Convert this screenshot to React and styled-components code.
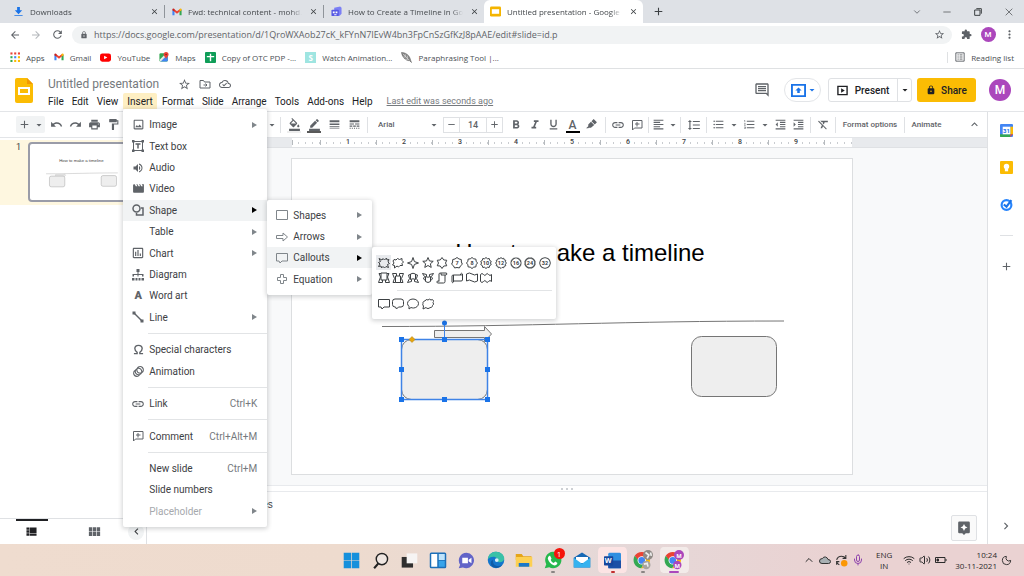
import styled, { createGlobalStyle, css } from "styled-components"
import {
  MdAdd,
  MdAnimation,
  MdArrowBack,
  MdArrowDropDown,
  MdArrowForward,
  MdBorderColor,
  MdChevronLeft,
  MdChevronRight,
  MdClose,
  MdExtension,
  MdFormatAlignLeft,
  MdFormatBold,
  MdFormatClear,
  MdFormatColorFill,
  MdFormatIndentDecrease,
  MdFormatIndentIncrease,
  MdFormatItalic,
  MdFormatLineSpacing,
  MdFormatListBulleted,
  MdFormatListNumbered,
  MdFormatPaint,
  MdFormatUnderlined,
  MdInsertLink,
  MdKeyboardArrowUp,
  MdLineStyle,
  MdLineWeight,
  MdLock,
  MdMoreVert,
  MdMovie,
  MdOutlineCloudDone,
  MdOutlineImage,
  MdOutlineInsertChart,
  MdOutlineInsertComment,
  MdPrint,
  MdRedo,
  MdRefresh,
  MdRemove,
  MdStarBorder,
  MdUndo,
  MdViewModule,
  MdVolumeUp,
} from "react-icons/md"
import { ChevronDown, ChevronUp, Mic, Moon, Volume2, Wifi } from "lucide-react"

const GlobalStyle = createGlobalStyle`
  *, *::before, *::after {
    box-sizing: border-box;
  }

  body {
    margin: 0;
    background: white;
    font-family: Roboto, "Liberation Sans", sans-serif;
    font-size: 10px;
    color: #3c4043;
  }

  button, input, select {
    margin: 0;
    padding: 0;
    border: 0;
    background: none;
    font: inherit;
    color: inherit;
    outline: none;
  }

  svg {
    display: block;
    flex-shrink: 0;
  }
`

const Page = styled.div`
  display: flex;
  flex-direction: column;
  min-height: 100vh;
`

/* ---------- browser ---------- */

const Browser = styled.header`
  font-family: "Open Sans", "Noto Sans", sans-serif;
  font-size: 8px;
  color: #5f6368;
`

const TabStrip = styled.div`
  display: flex;
  height: 23px;
  padding-left: 7px;
  background: #dee1e6;
`

const Tab = styled.div`
  display: flex;
  align-items: center;
  width: 159px;
  padding: 0 5px 0 6px;
  gap: 6px;
  border-radius: 6px 6px 0 0;
  color: #45494d;
  background: ${props => (props.$active ? "white" : "none")};
`

const TabTitle = styled.span`
  flex: 1;
  min-width: 0;
  overflow: hidden;
  white-space: nowrap;
  mask-image: linear-gradient(90deg, black 90%, transparent);
`

const TabDivider = styled.i`
  width: 1px;
  height: 13px;
  margin: 5px -4px 5px -1px;
  background: #8f949a;
`

const ChromeButton = styled.button`
  display: flex;
  align-items: center;
  justify-content: center;
  width: ${props => props.$width || 10}px;
  color: ${props => props.$color || "#3c4043"};
`

const WindowButtons = styled.div`
  display: flex;
  margin-left: auto;
`

const AddressRow = styled.div`
  display: flex;
  align-items: center;
  height: 23px;
  padding: 0 6px 0 4px;
`

const Omnibox = styled.label`
  display: flex;
  flex: 1;
  align-items: center;
  gap: 6px;
  height: 18px;
  margin: 0 5px 0 4px;
  padding: 0 7px 0 8px;
  border-radius: 9px;
  background: #f1f3f4;
  color: #5f6368;

  input {
    flex: 1;
    font-size: 9px;
  }
`

const Bookmarks = styled.nav`
  display: flex;
  align-items: center;
  height: 23px;
  padding: 0 10px;
  gap: 9px;
  border-bottom: 1px solid #dfe1e3;

  a {
    display: flex;
    align-items: center;
    gap: 6px;
    color: #4b4f54;
    text-decoration: none;
    white-space: nowrap;
  }

  a:last-child {
    margin-left: auto;
    padding-left: 7px;
    border-left: 1px solid #dfe1e3;
  }
`

/* ---------- docs header ---------- */

const DocsHeader = styled.div`
  display: flex;
  height: 43px;
  padding: 0 13px 0 15px;
  border-bottom: 1px solid #e3e5e8;
`

const Heading = styled.div`
  flex: 1;
  padding: 7px 0 0 11px;
`

const TitleRow = styled.div`
  display: flex;
  align-items: center;
  gap: 8px;
  height: 16px;
  padding-left: 4px;
  color: #5f6368;

  input {
    width: 122px;
    font-size: 12px;
    color: #75797d;
  }
`

const MenuBar = styled.nav`
  display: flex;
  align-items: center;
  height: 18px;
  color: #202124;
`

const MenuAnchor = styled.div`
  position: relative;
  margin: 0 ${props => (props.$open ? 1 : 0)}px;
`

const MenuButton = styled.button`
  height: 16px;
  padding: 0 4px;
  border-radius: 2px 2px 0 0;
  white-space: nowrap;
  background: ${props => (props.$open ? "#feefc3" : "none")};
`

const LastEdit = styled.a`
  margin-left: 10px;
  color: #75797d;
  font-size: 9px;
  white-space: nowrap;
`

const HeaderActions = styled.div`
  display: flex;
  align-items: center;
  font-weight: 500;
`

const Pill = styled.button`
  display: flex;
  align-items: center;
  justify-content: center;
  width: 37px;
  height: 24px;
  margin: 0 7px 0 14px;
  padding-left: 4px;
  border: 1px solid #e3e5e8;
  border-radius: 12px;
  color: #1a73e8;
`

const PresentGroup = styled.div`
  display: flex;
  height: 24px;
  margin-right: 5px;
  border: 1px solid #dfe1e4;
  border-radius: 3px;

  button {
    display: flex;
    align-items: center;
    justify-content: center;
    gap: 7px;
    width: 68px;
    color: #202124;
  }

  button + button {
    width: 14px;
    border-left: 1px solid #dfe1e4;
  }
`

const ShareButton = styled.button`
  display: flex;
  align-items: center;
  justify-content: center;
  gap: 5px;
  width: 59px;
  height: 24px;
  margin-right: 13px;
  border-radius: 3px;
  background: #fbbc04;
  color: #202124;
`

const Avatar = styled.span`
  display: flex;
  align-items: center;
  justify-content: center;
  width: ${props => props.$size}px;
  height: ${props => props.$size}px;
  border-radius: 50%;
  background: #ab47bc;
  color: white;
  font: 500 ${props => (props.$size > 16 ? 12 : 8)}px Roboto, sans-serif;
`

/* ---------- menus ---------- */

const Popup = styled.div`
  position: absolute;
  z-index: 5;
  background: white;
  border-radius: 2px;
  box-shadow: 0 1px 4px 1px rgba(60, 64, 67, 0.22);
  color: #3c4043;
`

const InsertMenu = styled(Popup)`
  top: 100%;
  left: 0;
  width: 144px;
  padding: 5px 0;
`

const ShapeMenu = styled(Popup)`
  top: 0;
  left: 100%;
  width: 105px;
  padding: 5px 0;
`

const Palette = styled(Popup)`
  top: 0;
  left: 100%;
  width: 184px;
  padding: 8px 4px;
`

const MenuSection = styled.div`
  display: flex;
  flex-direction: column;
  height: ${props => props.$height}px;
`

const MenuItem = styled.div`
  position: relative;
  flex: 1;
  background: ${props => (props.$active ? "#f1f3f4" : "none")};
  color: ${props => (props.$disabled ? "#a6a9ad" : "inherit")};

  > button {
    display: grid;
    grid-template-columns: 12px 1fr auto;
    align-items: center;
    gap: 5px;
    width: 100%;
    height: 100%;
    padding: 0 10px 0 9px;
    text-align: left;
    white-space: nowrap;
  }
`

const ItemIcon = styled.span`
  display: flex;
  justify-content: center;
  color: ${props => (props.$light ? "#80868b" : "#5f6368")};
`

const Shortcut = styled.span`
  color: #75797d;
`

const MenuArrow = styled.span`
  width: 0;
  border: solid transparent;
  border-width: 3px 0 3px 5px;
  border-left-color: ${props => (props.$active ? "#000" : "#80868b")};
`

const MenuRule = styled.hr`
  height: 1px;
  margin: 5px 0 5px ${props => props.$indent || 25}px;
  border: 0;
  background: #e2e4e6;
`

const PaletteGrid = styled.div`
  display: grid;
  grid-template-columns: repeat(12, 1fr);
  grid-auto-rows: 15px;

  button {
    display: flex;
    align-items: center;
    justify-content: center;
  }

  button[aria-pressed="true"] {
    background: #e8eaed;
  }
`

/* ---------- toolbar ---------- */

const Body = styled.div`
  display: flex;
  flex: 1;
`

const Editor = styled.main`
  display: flex;
  flex: 1;
  flex-direction: column;
  min-width: 0;
`

const Toolbar = styled.div`
  display: flex;
  align-items: center;
  height: 26px;
  padding: 0 6px 0 16px;
  border-bottom: 1px solid #e3e5e8;
  color: #5f6368;
`

const ToolGroup = styled.div`
  display: flex;
  align-items: center;
  justify-content: ${props => (props.$start ? "flex-start" : "center")};
  flex-shrink: 0;
  width: ${props => props.$width}px;
  height: 16px;

  & + & {
    border-left: 1px solid #dfe1e4;
  }

  &:nth-child(2) {
    border-left: 0;
  }
`

const ToolButton = styled.button`
  display: flex;
  align-items: center;
  justify-content: center;
  flex-shrink: 0;
  width: ${props => props.$width || 19}px;
  height: 17px;

  ${props =>
    props.$underline &&
    css`
      background: linear-gradient(${props.$underline}, ${props.$underline})
        center bottom / 14px 2px no-repeat;
    `}
`

const TextColor = styled(ToolButton)`
  font-size: 12px;
  font-weight: 500;
  line-height: 12px;
`

const NewSlide = styled.div`
  display: flex;
  width: 29px;
  height: 17px;
  margin-right: 2px;
  border-radius: 2px;
  background: #f1f3f4;
`

const FontPicker = styled.label`
  display: flex;
  align-items: center;
  width: 65px;
  margin-left: 10px;
  padding-right: 3px;
  font-size: 8px;
  font-weight: 500;

  select {
    flex: 1;
    appearance: none;
  }
`

const SizeStepper = styled.div`
  display: flex;
  height: 16px;
  margin-right: 3px;
  border: 1px solid #dfe1e4;

  button {
    height: auto;
  }

  input {
    width: 28px;
    border: solid #dfe1e4;
    border-width: 0 1px;
    font-size: 9px;
    font-weight: 500;
    text-align: center;
  }
`

const TextTool = styled.button`
  font-size: 8px;
  font-weight: 500;
  white-space: nowrap;
`

const Collapse = styled.button`
  margin-left: auto;
`

/* ---------- workspace ---------- */

const Workspace = styled.div`
  display: flex;
  flex: 1;
`

const Filmstrip = styled.aside`
  display: flex;
  flex-direction: column;
  width: 147px;
  padding-top: 2px;
  border-right: 1px solid #dfe1e4;
`

const FilmSlide = styled.div`
  display: flex;
  gap: 7px;
  padding: 2px 14px 3px 16px;
  background: #fef7e0;
  font-size: 9px;
`

const Thumb = styled.div`
  flex: 1;
  border: 2px solid #9a9ca8;
  border-radius: 4px;
  background: white;
  overflow: hidden;
`

const FilmFooter = styled.div`
  display: flex;
  height: 26px;
  margin-top: auto;
  padding-left: 16px;
  border-top: 1px solid #dfe1e4;
`

const ViewButton = styled.button`
  display: flex;
  align-items: center;
  justify-content: center;
  width: 32px;
  margin-right: ${props => (props.$active ? 31 : 17)}px;
  padding: 0 2px 2px 0;
  border-top: 2px solid ${props => (props.$active ? "#202124" : "transparent")};
  color: ${props => (props.$active ? "#202124" : "#5f6368")};
`

const CollapseStrip = styled.button`
  display: flex;
  align-items: center;
  justify-content: center;
  align-self: center;
  width: 16px;
  height: 16px;
  border-radius: 50%;
  background: #f1f3f4;
`

const Stage = styled.section`
  position: relative;
  display: flex;
  flex: 1;
  flex-direction: column;
`

const Ruler = styled.div`
  height: 10px;
  padding: 0 135px 0 145px;
  border-bottom: 1px solid #dfe1e4;
  background: #e8eaed;
`

const RulerScale = styled.div`
  display: grid;
  grid-template-columns: 1fr repeat(9, 2fr) 1fr;
  grid-template-rows: 9px;
  background: white;
  font-size: 7px;
  line-height: 5px;
`

const RulerCell = styled.span`
  display: flex;
  align-items: center;
  justify-content: center;
  border: solid transparent;
  border-width: 2px 0;
  background: linear-gradient(#b6babe, #b6babe) left / 1px 100% no-repeat
      padding-box,
    repeating-linear-gradient(90deg, transparent 0 6px, #c9ccd0 6px 7px) left /
      100% 2px no-repeat;

  b {
    padding: 0 4px;
    font-weight: 500;
    background: white;
  }
`

const Canvas = styled.div`
  flex: 1;
  padding: 11px 135px 10px 145px;
  background: #f8f9fa;
`

const Slide = styled.article`
  position: relative;
  aspect-ratio: 16 / 9;
  background: white;
  box-shadow: 0 0 0 1px #dcdee0;
`

const SlideTitle = styled.h1`
  position: absolute;
  top: 80px;
  right: 0;
  left: 16px;
  margin: 0;
  color: black;
  font: 24px/28px "Liberation Sans", Arial, sans-serif;
  text-align: center;
`

const NotesHandle = styled.div`
  display: flex;
  align-items: center;
  justify-content: center;
  gap: 3px;
  height: 7px;
  border: solid #e8eaed;
  border-width: 1px 0;

  i {
    width: 2px;
    height: 2px;
    border-radius: 50%;
    background: #bdc1c6;
  }
`

const Notes = styled.p`
  height: 52px;
  margin: 0;
  padding: 7px 8px;
  font: 10px/12px "Liberation Sans", Arial, sans-serif;
`

const ExploreButton = styled.button`
  position: absolute;
  right: 10px;
  bottom: 3px;
  display: flex;
  align-items: center;
  justify-content: center;
  width: 26px;
  height: 26px;
  border: 1px solid #dfe1e4;
  border-radius: 2px;
  background: #fafafa;
`

const SidePanel = styled.aside`
  display: flex;
  flex-direction: column;
  align-items: center;
  width: 37px;
  padding: 12px 0 11px;
  gap: 24px;
  border-left: 1px solid #dfe1e4;
  color: #5f6368;

  hr {
    width: 13px;
    height: 1px;
    margin: 0;
    border: 0;
    background: #dfe1e4;
  }

  button:last-child {
    margin-top: auto;
  }
`

/* ---------- taskbar ---------- */

const Taskbar = styled.footer`
  display: grid;
  grid-template-columns: 1fr auto 1fr;
  height: 32px;
  padding-left: 4px;
  background: linear-gradient(90deg, #efdccf, #eedbce 33%, #e5d8d8 60%, #ead2d2 82%);
  font-family: "Open Sans", "Noto Sans", sans-serif;
  font-size: 8px;
  color: #2b2b2b;
`

const Apps = styled.nav`
  display: flex;
  grid-column: 2;
  width: 353px;
`

const AppButton = styled.button`
  position: relative;
  display: flex;
  flex: 1 1 0;
  align-items: center;
  justify-content: center;

  ${props =>
    props.$tile &&
    css`
      margin: 3px 0;
      border: solid transparent;
      border-width: 0 2px;
      border-radius: 5px;
      background: ${props.$tile} padding-box;
    `}

  ${props =>
    props.$running &&
    css`
      &::after {
        content: "";
        position: absolute;
        bottom: ${props.$tile ? 0 : 3}px;
        width: ${props.$wide ? 10 : 4}px;
        height: 2px;
        border-radius: 1px;
        background: ${props.$running};
      }
    `}
`

const Badge = styled.span`
  position: absolute;
  top: 4px;
  right: 3px;
  width: 11px;
  height: 11px;
  border-radius: 50%;
  background: #f5140a;
  color: white;
  line-height: 11px;
  text-align: center;
`

const Tray = styled.div`
  display: flex;
  align-items: center;
  justify-content: flex-end;
  gap: 4px;
  padding-right: 12px;
  line-height: 11px;
  text-align: center;
`

const Clock = styled.time`
  margin-left: 4px;
  text-align: right;
  white-space: nowrap;
`

const Language = styled.span`
  margin: 0 7px 0 8px;
`

/* ---------- drawings ---------- */

function Glyph({ size = 12, box = 24, children, ...rest }) {
  return (
    <svg
      width={size}
      height={size}
      viewBox={`0 0 ${box} ${box}`}
      fill="none"
      stroke="currentColor"
      {...rest}
    >
      {children}
    </svg>
  )
}

const DownloadIcon = () => (
  <Glyph size={11} stroke="none" fill="#1a73e8">
    <path d="M9 2h6v7h5l-8 9-8-9h5zM3 20h18v2H3z" />
  </Glyph>
)

const GmailIcon = () => (
  <Glyph size={10} stroke="none">
    <path fill="#4285f4" d="M1 20V6l5 4v10z" />
    <path fill="#34a853" d="M18 20V10l5-4v14z" />
    <path fill="#ea4335" d="M4 4l8 6 8-6 3 3-11 9L1 7z" />
    <path fill="#c5221f" d="M1 6c0-3 3-3 5-1v6L1 8z" />
    <path fill="#fbbc04" d="M23 6c0-3-3-3-5-1v6l5-3z" />
  </Glyph>
)

const MeetDocIcon = () => (
  <Glyph size={11} stroke="none">
    <path fill="#7b7ff5" d="M7 4l13-3 3 3v13l-4 4H7z" />
    <rect fill="#5558e3" x="1" y="8" width="16" height="14" rx="2" />
    <path fill="white" d="M4 12h4v4H4zM10 12h4v4h-4zM7 18h5v2H7z" />
  </Glyph>
)

const SlidesFavicon = () => (
  <Glyph size={11} stroke="none">
    <rect fill="#f4b400" x="0" y="1" width="24" height="22" rx="3" />
    <rect fill="white" x="4" y="7" width="16" height="10" />
  </Glyph>
)

const AppsGridIcon = () => (
  <Glyph size={10} stroke="none">
    {["#ea4335", "#ea4335", "#ea4335", "#34a853", "#4285f4", "#fbbc04", "#34a853", "#fbbc04", "#fbbc04"].map(
      (fill, i) => (
        <rect key={i} fill={fill} x={1 + (i % 3) * 9} y={1 + Math.floor(i / 3) * 9} width="5" height="5" />
      )
    )}
  </Glyph>
)

const YouTubeIcon = () => (
  <Glyph size={11} stroke="none">
    <rect fill="#f00" x="0" y="3" width="24" height="18" rx="5" />
    <path fill="white" d="M9 8l7 4-7 4z" />
  </Glyph>
)

const MapsIcon = () => (
  <Glyph size={10} stroke="none">
    <rect fill="#34a853" x="1" y="3" width="20" height="20" rx="3" />
    <path fill="#4285f4" d="M3 23L21 6v14c0 2-1 3-3 3z" />
    <path fill="#e8eaed" d="M1 19L17 3l4 3L4 23z" />
    <path fill="#ea4335" d="M17 0c4 0 6 3 6 6 0 4-5 6-6 11-1-5-6-7-6-11 0-3 2-6 6-6z" />
    <circle fill="#8c1d18" cx="17" cy="6" r="2" />
  </Glyph>
)

const SheetIcon = () => (
  <Glyph size={11} stroke="none">
    <rect fill="#0f9d58" x="0" y="0" width="24" height="24" rx="2" />
    <path stroke="white" strokeWidth="3" d="M12 4v16M4 10h16" />
  </Glyph>
)

const LetterTile = styled.span`
  width: 11px;
  height: 11px;
  background: #9fe5e1;
  color: white;
  font-weight: 700;
  line-height: 11px;
  text-align: center;
`

const FeatherIcon = () => (
  <Glyph size={11} strokeWidth="1">
    <path fill="#888" stroke="#444" d="M1 1c9 0 18 6 20 17l2 5-4-4C9 19 3 11 1 1z" />
    <path stroke="white" d="M4 4l14 14M9 5l1 5M14 8v6M5 11l5 0M9 16h6" />
  </Glyph>
)

const ReadingListIcon = () => (
  <Glyph size={10} strokeWidth="2">
    <path d="M2 2h20v20H2zM6 7h3M11 7h7M6 12h3M11 12h7M6 17h3M11 17h7" />
  </Glyph>
)

const SlidesLogo = () => (
  <svg width="18" height="25" viewBox="0 0 18 25">
    <path fill="#fbbc04" d="M2 0h10l6 6v17a2 2 0 0 1-2 2H2a2 2 0 0 1-2-2V2a2 2 0 0 1 2-2z" />
    <path fill="#f29900" d="M12 0l6 6h-6z" />
    <path fill="none" stroke="white" strokeWidth="2" d="M4 10h10v6H4z" />
  </svg>
)

const MoveIcon = () => (
  <Glyph strokeWidth="2">
    <path d="M2 5h7l2 3h11v12H2z" />
    <path d="M9 14h7M13 11l3 3-3 3" />
  </Glyph>
)

const PresentIcon = () => (
  <Glyph size={11} strokeWidth="3">
    <path d="M2 3h20v18H2z" />
    <path fill="currentColor" stroke="none" d="M9 7l8 5-8 5z" />
  </Glyph>
)

const CastIcon = () => (
  <Glyph size={15} strokeWidth="3">
    <path d="M1.500 3h21v18h-21z" />
    <path fill="currentColor" stroke="none" d="M12 7l5 5h-3v4h-4v-4H7z" />
  </Glyph>
)

const TextBoxIcon = () => (
  <Glyph strokeWidth="2">
    <path d="M3 3h18v18H3z" />
    <path strokeWidth="3" d="M7 8h10M12 8v9" />
    <path fill="currentColor" stroke="none" d="M0 0h5v5H0zM19 0h5v5h-5zM0 19h5v5H0zM19 19h5v5h-5z" />
  </Glyph>
)

const ShapeIcon = () => (
  <Glyph strokeWidth="3">
    <circle cx="9" cy="9" r="7" />
    <path d="M18 8h4v14H9v-4" />
  </Glyph>
)

const DiagramIcon = () => (
  <Glyph stroke="none" fill="currentColor">
    <path d="M9 0h6v6H9zM11 6h2v5h-2zM2 10h20v2H2zM1 10h3v5H1zM11 10h2v5h-2zM20 10h3v5h-3zM0 18h5v5H0zM7 18h4v5H7zM13 18h4v5h-4zM19 18h5v5h-5z" />
  </Glyph>
)

const LineIcon = () => (
  <Glyph stroke="currentColor" strokeWidth="3">
    <path d="M4 4l16 16" />
    <path fill="currentColor" stroke="none" d="M1 1h6v6H1zM17 17h6v6h-6z" />
  </Glyph>
)

const CommentIcon = ({ size = 12 }) => (
  <Glyph size={size} strokeWidth="2">
    <path d="M3 3h19v15H7l-4 4zM12 6v9M8 10h9" />
  </Glyph>
)

const WordArt = styled.span`
  font-size: 11px;
  font-weight: 900;
`

const OmegaIcon = () => (
  <Glyph size={11} strokeWidth="3">
    <path d="M2 21h7v-3c-3-2-5-4-5-8 0-4 3-7 8-7s8 3 8 7-2 6-5 8v3h7" />
  </Glyph>
)

const HighlighterIcon = () => (
  <Glyph size={13} stroke="none" fill="currentColor">
    <path d="M16 2l6 6-4 4-6-6zM11 7l6 6-6 5H7l-1 1H2l4-4v-3z" />
  </Glyph>
)

const FilmIcon = () => (
  <Glyph size={11} stroke="none" fill="currentColor">
    <path d="M1 3h6v5H1zM1 9.500h6v5H1zM1 16h6v5H1zM8 3h15v13H8zM8 17h15v4H8z" />
  </Glyph>
)

const ExploreIcon = () => (
  <Glyph size={14} stroke="none" fill="#5f6368">
    <path d="M4 1h16a2 2 0 0 1 2 2v16a2 2 0 0 1-2 2h-5l-3 3-3-3H4a2 2 0 0 1-2-2V3a2 2 0 0 1 2-2z" />
    <path fill="white" d="M12 5l2 4 4 2-4 2-2 4-2-4-4-2 4-2z" />
  </Glyph>
)

const CalendarIcon = () => (
  <Glyph size={13} stroke="none">
    <rect fill="#4285f4" x="0" y="0" width="24" height="24" rx="2" />
    <path fill="#fbbc04" d="M19 5h5v14h-5z" />
    <path fill="#34a853" d="M0 19h19v5H2c-1 0-2-1-2-2z" />
    <path fill="#ea4335" d="M19 19h5l-5 5z" />
    <path fill="white" d="M5 5h14v14H5z" />
    <text x="12" y="16" fill="#1a73e8" fontSize="11" fontWeight="700" textAnchor="middle">31</text>
  </Glyph>
)

const KeepIcon = () => (
  <Glyph size={13} stroke="none">
    <rect fill="#fbbc04" width="24" height="24" rx="2" />
    <circle fill="white" cx="12" cy="10" r="5" />
    <path fill="white" d="M9 14h6v5H9z" />
  </Glyph>
)

const TasksIcon = () => (
  <Glyph size={13} stroke="#2684fc" strokeWidth="4">
    <circle cx="12" cy="13" r="9" />
    <path d="M7 12l5 4 9-12" stroke="#1a73e8" />
  </Glyph>
)

/* shape palette, all on a 24 unit box */

function starPoints(count, outer, inner) {
  return Array.from({ length: count * 2 }, (_, i) => {
    const angle = (Math.PI * i) / count - Math.PI / 2
    const r = i % 2 ? inner : outer
    return `${12 + r * Math.cos(angle)},${12 + r * Math.sin(angle)}`
  }).join(" ")
}

const Star = ({ count, inner, label }) => (
  <Glyph size={12} strokeWidth="2">
    <polygon points={starPoints(count, 11, inner)} />
    {label && (
      <text x="12" y="16" fill="currentColor" stroke="none" fontSize="11" fontWeight="700" textAnchor="middle">
        {label}
      </text>
    )}
  </Glyph>
)

const Drawn = ({ d }) => (
  <Glyph size={12} strokeWidth="2">
    <path d={d} />
  </Glyph>
)

const STARS = [
  { name: "Explosion 1", d: "M2 3l6 3 2-3 3 3 4-4 1 4 4-1-2 5 3 3-4 2 2 6-5-2-3 3-3-3-3 3-1-4-5 1 3-5-3-3 4-2z" },
  { name: "Explosion 2", d: "M4 5l4 1 3-3 4 2 5-2v4l3 3-3 3 1 4-5 0-3 3-3-2-5 4v-5l-4-1 3-4-2-4z" },
  { name: "4-point star", count: 4, inner: 4 },
  { name: "5-point star", count: 5, inner: 5 },
  { name: "6-point star", count: 6, inner: 7 },
  { name: "7-point star", count: 7, inner: 9, label: "7" },
  { name: "8-point star", count: 8, inner: 9, label: "8" },
  { name: "10-point star", count: 10, inner: 9, label: "10" },
  { name: "12-point star", count: 12, inner: 9, label: "12" },
  { name: "16-point star", count: 16, inner: 9, label: "16" },
  { name: "24-point star", count: 24, inner: 9, label: "24" },
  { name: "32-point star", count: 32, inner: 10, label: "32" },
  { name: "Ribbon 2", d: "M6 2h12v14H6zM6 3H2l3 7-4 11h8v-5M18 3h4l-3 7 4 11h-8v-5" },
  { name: "Ribbon", d: "M7 8h10v13H7zM7 21H2l3-8-4-10h8v5M17 21h5l-3-8 4-10h-8v5" },
  { name: "Curved ribbon 2", d: "M7 4q5-3 10 0v11q-5-3-10 0zM7 5L3 6l2 7-4 8 8-2v-4M17 5l4 1-2 7 4 8-8-2v-4" },
  { name: "Curved ribbon", d: "M7 9q5 3 10 0v10q-5 4-10 0zM7 17l-4-3 2-5-4-6 8 2v4M17 17l4-3-2-5 4-6-8 2v4" },
  { name: "Vertical scroll", d: "M6 19V4q0-2 3-2h12q2 3-1 4h-2v13q0 3-3 3H3q-3-2 0-4h3M9 2q3 2 1 4h8" },
  { name: "Horizontal scroll", d: "M2 8q0-2 3-2h14V4q2-3 4 0v12q0 2-3 2H5v2q-2 3-3 0zM5 6v12M19 6q3 1 4-2" },
  { name: "Wave", d: "M1 4q6-4 11 0t11 0v14q-6 4-11 0T1 18z" },
  { name: "Double wave", d: "M1 5q3-4 6 0t5 0 5 0 6 0v14q-3-4-6 0t-5 0-5 0-6 0z" },
]

const CALLOUTS = [
  { name: "Rectangular callout", d: "M1 3h22v15H12l-4 4-2-4H1z" },
  { name: "Rounded callout", d: "M6 2h12q5 0 5 5v6q0 5-5 5h-5l-4 4-2-4H6q-5 0-5-5V7q0-5 5-5z" },
  { name: "Oval callout", d: "M12 2c6 0 11 4 11 9s-5 9-10 9q-3 0-5-1l-4 3v-5q-3-3-3-6c0-5 5-9 11-9z" },
  {
    name: "Cloud callout",
    d: "M6 6a4 4 0 0 1 6-2 4 4 0 0 1 6 0 3 3 0 0 1 4 5 4 4 0 0 1-1 6 4 4 0 0 1-5 4 5 5 0 0 1-8 0l-6 3 1-6a4 4 0 0 1-1-5 4 4 0 0 1 4-5z",
  },
]

function PaletteRow({ shapes, pressed }) {
  return (
    <PaletteGrid>
      {shapes.map(shape => (
        <button key={shape.name} aria-label={shape.name} aria-pressed={shape.name === pressed}>
          {shape.d ? <Drawn d={shape.d} /> : <Star {...shape} />}
        </button>
      ))}
    </PaletteGrid>
  )
}

/* ---------- components ---------- */

const TABS = [
  { title: "Downloads", icon: <DownloadIcon />, divider: true },
  { title: "Fwd: technical content - mohd.a.r", icon: <GmailIcon />, divider: true },
  { title: "How to Create a Timeline in Google", icon: <MeetDocIcon /> },
  { title: "Untitled presentation - Google Slides", icon: <SlidesFavicon />, active: true },
]

const BOOKMARKS = [
  { title: "Apps", icon: <AppsGridIcon /> },
  { title: "Gmail", icon: <GmailIcon /> },
  { title: "YouTube", icon: <YouTubeIcon /> },
  { title: "Maps", icon: <MapsIcon /> },
  { title: "Copy of OTC PDP -...", icon: <SheetIcon /> },
  { title: "Watch Animation...", icon: <LetterTile>S</LetterTile> },
  { title: "Paraphrasing Tool |...", icon: <FeatherIcon /> },
  { title: "Reading list", icon: <ReadingListIcon /> },
]

function BrowserChrome() {
  return (
    <Browser>
      <TabStrip>
        {TABS.map(tab => (
          <Tab key={tab.title} $active={tab.active}>
            {tab.icon}
            <TabTitle>{tab.title}</TabTitle>
            <ChromeButton aria-label="Close tab">
              <MdClose size={9} />
            </ChromeButton>
            {tab.divider && <TabDivider />}
          </Tab>
        ))}
        <ChromeButton $width={30} aria-label="New tab">
          <MdAdd size={13} />
        </ChromeButton>
        <WindowButtons>
          <ChromeButton $width={31} $color="#5f6368" aria-label="Search tabs">
            <ChevronDown size={10} />
          </ChromeButton>
          <ChromeButton $width={30} aria-label="Minimize">
            <Glyph size={8}>
              <path strokeWidth="2" d="M1 12h22" />
            </Glyph>
          </ChromeButton>
          <ChromeButton $width={31} aria-label="Restore">
            <Glyph size={8} strokeWidth="3">
              <path d="M2 6h16v16H2zM7 2h15v15" />
            </Glyph>
          </ChromeButton>
          <ChromeButton $width={31} aria-label="Close">
            <Glyph size={8} strokeWidth="2">
              <path d="M2 2l20 20M22 2L2 22" />
            </Glyph>
          </ChromeButton>
        </WindowButtons>
      </TabStrip>
      <AddressRow>
        <ChromeButton $width={21} $color="#5f6368" aria-label="Back">
          <MdArrowBack size={12} />
        </ChromeButton>
        <ChromeButton $width={22} $color="#b4b7bb" aria-label="Forward">
          <MdArrowForward size={12} />
        </ChromeButton>
        <ChromeButton $width={21} $color="#5f6368" aria-label="Reload">
          <MdRefresh size={13} />
        </ChromeButton>
        <Omnibox>
          <MdLock size={8} />
          <input
            aria-label="Address"
            defaultValue="https://docs.google.com/presentation/d/1QroWXAob27cK_kFYnN7IEvW4bn3FpCnSzGfKzJ8pAAE/edit#slide=id.p"
          />
          <MdStarBorder size={11} />
        </Omnibox>
        <ChromeButton $width={19} $color="#5f6368" aria-label="Extensions">
          <MdExtension size={11} />
        </ChromeButton>
        <ChromeButton $width={24} aria-label="Profile">
          <Avatar $size={15}>M</Avatar>
        </ChromeButton>
        <ChromeButton $width={18} $color="#5f6368" aria-label="Browser menu">
          <MdMoreVert size={13} />
        </ChromeButton>
      </AddressRow>
      <Bookmarks>
        {BOOKMARKS.map(mark => (
          <a key={mark.title} href="#bookmark">
            {mark.icon}
            {mark.title}
          </a>
        ))}
      </Bookmarks>
    </Browser>
  )
}

function Item({ icon, label, shortcut, more, active, disabled, light, children }) {
  return (
    <MenuItem $active={active} $disabled={disabled}>
      <button disabled={disabled}>
        <ItemIcon $light={light}>{icon}</ItemIcon>
        {label}
        {shortcut && <Shortcut>{shortcut}</Shortcut>}
        {more && <MenuArrow $active={active} />}
      </button>
      {children}
    </MenuItem>
  )
}

function CalloutPalette() {
  return (
    <Palette>
      <PaletteRow shapes={STARS} pressed="Explosion 1" />
      <MenuRule $indent={21} />
      <PaletteRow shapes={CALLOUTS} />
    </Palette>
  )
}

function ShapeSubmenu() {
  return (
    <ShapeMenu>
      <MenuSection $height={85}>
        <Item light more label="Shapes" icon={<Drawn d="M1 3h22v18H1z" />} />
        <Item light more label="Arrows" icon={<Drawn d="M1 9h13V4l9 8-9 8v-5H1z" />} />
        <Item light more active label="Callouts" icon={<Drawn d="M1 3h22v15H12l-4 4-2-4H1z" />}>
          <CalloutPalette />
        </Item>
        <Item light more label="Equation" icon={<Drawn d="M9 3h6v6h6v6h-6v6H9v-6H3V9h6z" />} />
      </MenuSection>
    </ShapeMenu>
  )
}

function InsertDropdown() {
  return (
    <InsertMenu>
      <MenuSection $height={214}>
        <Item more label="Image" icon={<MdOutlineImage size={13} />} />
        <Item label="Text box" icon={<TextBoxIcon />} />
        <Item label="Audio" icon={<MdVolumeUp size={12} />} />
        <Item label="Video" icon={<MdMovie size={13} />} />
        <Item more active label="Shape" icon={<ShapeIcon />}>
          <ShapeSubmenu />
        </Item>
        <Item more label="Table" />
        <Item more label="Chart" icon={<MdOutlineInsertChart size={14} />} />
        <Item label="Diagram" icon={<DiagramIcon />} />
        <Item label="Word art" icon={<WordArt>A</WordArt>} />
        <Item more label="Line" icon={<LineIcon />} />
      </MenuSection>
      <MenuRule />
      <MenuSection $height={43}>
        <Item label="Special characters" icon={<OmegaIcon />} />
        <Item label="Animation" icon={<MdAnimation size={13} />} />
      </MenuSection>
      <MenuRule />
      <MenuSection $height={21}>
        <Item label="Link" shortcut="Ctrl+K" icon={<MdInsertLink size={14} />} />
      </MenuSection>
      <MenuRule />
      <MenuSection $height={22}>
        <Item label="Comment" shortcut="Ctrl+Alt+M" icon={<CommentIcon />} />
      </MenuSection>
      <MenuRule />
      <MenuSection $height={64}>
        <Item label="New slide" shortcut="Ctrl+M" />
        <Item label="Slide numbers" />
        <Item more disabled label="Placeholder" />
      </MenuSection>
    </InsertMenu>
  )
}

const MENUS = ["File", "Edit", "View", "Insert", "Format", "Slide", "Arrange", "Tools", "Add-ons", "Help"]

function Header() {
  return (
    <DocsHeader>
      <ChromeButton $width={18} aria-label="Slides home">
        <SlidesLogo />
      </ChromeButton>
      <Heading>
        <TitleRow>
          <input aria-label="Presentation name" defaultValue="Untitled presentation" />
          <MdStarBorder size={13} />
          <MoveIcon />
          <MdOutlineCloudDone size={12} />
        </TitleRow>
        <MenuBar>
          {MENUS.map(name => (
            <MenuAnchor key={name} $open={name === "Insert"}>
              <MenuButton $open={name === "Insert"}>{name}</MenuButton>
              {name === "Insert" && <InsertDropdown />}
            </MenuAnchor>
          ))}
          <LastEdit href="#history">Last edit was seconds ago</LastEdit>
        </MenuBar>
      </Heading>
      <HeaderActions>
        <ChromeButton $width={16} $color="#5f6368" aria-label="Comments">
          <MdOutlineInsertComment size={16} />
        </ChromeButton>
        <Pill aria-label="Present to a meeting">
          <CastIcon />
          <MdArrowDropDown size={12} />
        </Pill>
        <PresentGroup>
          <button>
            <PresentIcon />
            Present
          </button>
          <button aria-label="Present options">
            <MdArrowDropDown size={12} />
          </button>
        </PresentGroup>
        <ShareButton>
          <MdLock size={10} />
          Share
        </ShareButton>
        <Avatar $size={22}>M</Avatar>
      </HeaderActions>
    </DocsHeader>
  )
}

const Tool = ({ label, icon: Icon, size = 13, ...rest }) => (
  <ToolButton aria-label={label} {...rest}>
    <Icon size={size} />
  </ToolButton>
)

const Caret = ({ width = 12 }) => <Tool label="More" icon={MdArrowDropDown} size={12} $width={width} />

function EditToolbar() {
  return (
    <Toolbar>
      <ToolGroup $start $width={249}>
        <NewSlide>
          <Tool label="New slide" icon={MdAdd} $width={17} />
          <Caret />
        </NewSlide>
        <Tool label="Undo" icon={MdUndo} />
        <Tool label="Redo" icon={MdRedo} />
        <Tool label="Print" icon={MdPrint} />
        <Tool label="Paint format" icon={MdFormatPaint} />
      </ToolGroup>
      <ToolGroup $start $width={15}>
        <Caret />
      </ToolGroup>
      <ToolGroup $width={87}>
        <Tool label="Fill color" icon={MdFormatColorFill} $width={20} $underline="#eeeeee" />
        <Tool label="Border color" icon={MdBorderColor} $width={20} $underline="#595959" />
        <Tool label="Border weight" icon={MdLineWeight} $width={20} />
        <Tool label="Border dash" icon={MdLineStyle} $width={20} />
      </ToolGroup>
      <ToolGroup $start $width={238}>
        <FontPicker>
          <select aria-label="Font" defaultValue="Arial">
            <option>Arial</option>
          </select>
          <MdArrowDropDown size={12} />
        </FontPicker>
        <SizeStepper>
          <Tool label="Decrease font size" icon={MdRemove} size={11} $width={15} />
          <input aria-label="Font size" defaultValue="14" />
          <Tool label="Increase font size" icon={MdAdd} size={11} $width={15} />
        </SizeStepper>
        <Tool label="Bold" icon={MdFormatBold} size={14} />
        <Tool label="Italic" icon={MdFormatItalic} size={14} />
        <Tool label="Underline" icon={MdFormatUnderlined} />
        <TextColor aria-label="Text color" $underline="#000">
          A
        </TextColor>
        <Tool label="Highlight color" icon={HighlighterIcon} />
      </ToolGroup>
      <ToolGroup $width={43}>
        <Tool label="Insert link" icon={MdInsertLink} size={14} />
        <Tool label="Add comment" icon={CommentIcon} size={12} />
      </ToolGroup>
      <ToolGroup $width={32}>
        <Tool label="Align" icon={MdFormatAlignLeft} $width={17} />
        <Caret />
      </ToolGroup>
      <ToolGroup $width={26}>
        <Tool label="Line spacing" icon={MdFormatLineSpacing} size={14} />
      </ToolGroup>
      <ToolGroup $width={104}>
        <Tool label="Bulleted list" icon={MdFormatListBulleted} $width={17} />
        <Caret width={13} />
        <Tool label="Numbered list" icon={MdFormatListNumbered} $width={18} />
        <Caret width={13} />
        <Tool label="Decrease indent" icon={MdFormatIndentDecrease} $width={18} />
        <Tool label="Increase indent" icon={MdFormatIndentIncrease} $width={18} />
      </ToolGroup>
      <ToolGroup $width={25}>
        <Tool label="Clear formatting" icon={MdFormatClear} />
      </ToolGroup>
      <ToolGroup $width={69}>
        <TextTool>Format options</TextTool>
      </ToolGroup>
      <ToolGroup $width={44}>
        <TextTool>Animate</TextTool>
      </ToolGroup>
      <Collapse aria-label="Hide the menus">
        <MdKeyboardArrowUp size={13} />
      </Collapse>
    </Toolbar>
  )
}

function SlideThumb() {
  return (
    <Thumb>
      <svg viewBox="0 0 560 315" width="100%">
        <text x="288" y="103" fill="#444" fontSize="24" textAnchor="middle" fontFamily="Liberation Sans">
          How to make a timeline
        </text>
        <path d="M90 167C240 167 330 162 492 162" fill="none" stroke="#999" strokeWidth="2" />
        <path d="M143 171h50v-4l7 8-7 8v-4h-50z" fill="#eee" stroke="#bbb" strokeWidth="2" />
        <rect x="109" y="180" width="86" height="60" rx="10" fill="#eee" stroke="#aaa" strokeWidth="3" />
        <rect x="399" y="177" width="86" height="60" rx="10" fill="#eee" stroke="#aaa" strokeWidth="3" />
      </svg>
    </Thumb>
  )
}

const HANDLES = [
  [109, 180],
  [152, 180],
  [195, 180],
  [109, 210],
  [195, 210],
  [109, 240],
  [152, 240],
  [195, 240],
]

function SlideDrawing() {
  return (
    <svg viewBox="0 0 560 315" width="100%">
      <path d="M90 167.500C240 167.500 330 162 492 162" fill="none" stroke="#757575" />
      <path d="M142.500 171.500h50v-4l7 7.500-7 7.500v-4h-50z" fill="#eee" stroke="#757575" />
      <rect x="109.500" y="180.500" width="86" height="60" rx="10" fill="#eee" stroke="#757575" />
      <rect x="399.500" y="177.500" width="85" height="60" rx="10" fill="#eee" stroke="#757575" />
      <g fill="none" stroke="#3f83e6">
        <rect x="109.500" y="180.500" width="86" height="60" strokeWidth="1.500" />
        <path d="M152.500 165v15" />
      </g>
      <g fill="#1a73e8">
        {HANDLES.map(([x, y]) => (
          <rect key={`${x}-${y}`} x={x - 2} y={y - 2} width="5" height="5" />
        ))}
        <circle cx="152.500" cy="164" r="2.500" />
      </g>
      <path d="M120 177.500l3 3-3 3-3-3z" fill="#e8a50c" stroke="#a87a12" strokeWidth="0.500" />
    </svg>
  )
}

function EditorWorkspace() {
  return (
    <Workspace>
      <Filmstrip>
        <FilmSlide>
          1
          <SlideThumb />
        </FilmSlide>
        <FilmFooter>
          <ViewButton $active aria-label="Filmstrip view">
            <FilmIcon />
          </ViewButton>
          <ViewButton aria-label="Grid view">
            <MdViewModule size={15} />
          </ViewButton>
          <CollapseStrip aria-label="Hide filmstrip">
            <MdChevronLeft size={13} />
          </CollapseStrip>
        </FilmFooter>
      </Filmstrip>
      <Stage>
        <Ruler>
          <RulerScale>
            <RulerCell />
            {[1, 2, 3, 4, 5, 6, 7, 8, 9].map(n => (
              <RulerCell key={n}>
                <b>{n}</b>
              </RulerCell>
            ))}
            <RulerCell />
          </RulerScale>
        </Ruler>
        <Canvas>
          <Slide>
            <SlideTitle>How to make a timeline</SlideTitle>
            <SlideDrawing />
          </Slide>
        </Canvas>
        <NotesHandle>
          <i />
          <i />
          <i />
        </NotesHandle>
        <Notes>Click to add speaker notes</Notes>
        <ExploreButton aria-label="Explore">
          <ExploreIcon />
        </ExploreButton>
      </Stage>
    </Workspace>
  )
}

const ChromeLogo = ({ second }) => (
  <Glyph size={20} stroke="none">
    <path fill="#ea4335" d="M2 7a10 10 0 0 1 17 0l-8 1-4 6z" />
    <path fill="#34a853" d="M2 7a10 10 0 0 0 8 15l4-7-7-2z" />
    <path fill="#fbbc04" d="M19 7a10 10 0 0 1-9 15l5-8-2-6z" />
    <circle fill="white" cx="10.500" cy="12.500" r="5" />
    <circle fill="#4285f4" cx="10.500" cy="12.500" r="4" />
    <circle fill={second ? "#ab47bc" : "#8f8a86"} cx="18" cy="6" r="6" />
    <circle fill={second ? "#ab47bc" : "#a8a39f"} cx="16" cy="18" r="5" />
    {second ? (
      <g fill="white" fontSize="7" fontWeight="700" textAnchor="middle">
        <text x="18" y="9">M</text>
        <text x="16" y="21">M</text>
      </g>
    ) : (
      <path stroke="#eee" strokeWidth="2" d="M15 3l4 3-2 4M21 3l1 4M13 17l4-1 1 4" />
    )}
  </Glyph>
)

function TaskbarApps() {
  return (
    <Apps>
      <AppButton aria-label="Start">
        <Glyph size={17} stroke="none" fill="#1590dc">
          <path d="M1 1h10.500v10.500H1zM12.500 1H23v10.500H12.500zM1 12.500h10.500V23H1zM12.500 12.500H23V23H12.500z" />
        </Glyph>
      </AppButton>
      <AppButton aria-label="Search">
        <Glyph size={17} stroke="#222" strokeWidth="2">
          <circle cx="14" cy="10" r="8" fill="#efe6e1" />
          <path d="M9 16l-6 7" strokeWidth="3" />
        </Glyph>
      </AppButton>
      <AppButton aria-label="Task view">
        <Glyph size={17} stroke="none">
          <path fill="#2f2f2f" d="M1 7h16v15H1z" />
          <path fill="#f6f4f3" d="M8 2h15v14H8z" />
        </Glyph>
      </AppButton>
      <AppButton aria-label="Widgets">
        <Glyph size={18} stroke="none">
          <rect fill="#1c6fb8" x="1" y="2" width="22" height="21" rx="2" />
          <path fill="white" d="M3 4h8v17H3z" />
          <path fill="#bfe4fb" d="M13 4h8v8h-8z" />
          <path fill="#38a4ea" d="M13 13h8v8h-8z" />
        </Glyph>
      </AppButton>
      <AppButton aria-label="Chat">
        <Glyph size={17} stroke="none">
          <path fill="#6264c8" d="M12 1a11 11 0 1 1-5 21l-6 1 2-5A11 11 0 0 1 12 1z" />
          <path fill="white" d="M6 8h8v8H6zM15 11l4-3v8l-4-3z" />
        </Glyph>
      </AppButton>
      <AppButton aria-label="Edge">
        <Glyph size={18} stroke="none">
          <circle fill="#1376cc" cx="12" cy="12" r="11" />
          <path fill="#39c1a7" d="M1 11C2 4 7 1 12 1c7 0 11 5 11 9 0 5-8 7-9 3 1-5-7-8-13-2z" />
          <path fill="#0d5ba8" d="M8 12c-1 6 5 10 12 7-5 6-15 4-15-3 0-2 1-4 3-4z" />
          <circle fill="#d9eef7" cx="13" cy="12" r="2.500" />
        </Glyph>
      </AppButton>
      <AppButton aria-label="File Explorer">
        <Glyph size={18} stroke="none">
          <path fill="#e5a519" d="M1 4h8l2 3h11v5H1z" />
          <path fill="#fdd052" d="M1 8h22v13H1z" />
          <path fill="#1b77c9" d="M5 16h14v5H5z" />
        </Glyph>
      </AppButton>
      <AppButton aria-label="WhatsApp" $running="#8a8583">
        <Glyph size={18} stroke="none">
          <path fill="#25b84c" d="M12 1a11 11 0 1 1-5 20.700L1 23l2-5.500A11 11 0 0 1 12 1z" />
          <path fill="white" d="M8 6l2 4-1 2q1 3 4 4l2-2 3 2q-1 4-5 3-6-2-8-9 0-3 3-4z" />
        </Glyph>
        <Badge>1</Badge>
      </AppButton>
      <AppButton aria-label="Mail">
        <Glyph size={18} stroke="none">
          <path fill="#1669b5" d="M1 9l11-7 11 7v13H1z" />
          <path fill="white" d="M4 8h16v8H4z" />
          <path fill="#35b2ef" d="M1 9l11 8 11-8v13H1z" />
        </Glyph>
      </AppButton>
      <AppButton aria-label="Word" $tile="#fce4e4" $running="#c22e2e">
        <Glyph size={17} stroke="none">
          <rect fill="#2f8fe0" x="6" y="1" width="18" height="22" rx="2" />
          <path fill="#1c4fa6" d="M6 12h18v11H6z" />
          <rect fill="#16479d" x="0" y="6" width="13" height="13" rx="1" />
          <text x="6" y="16" fill="white" fontSize="10" fontWeight="700" textAnchor="middle">W</text>
        </Glyph>
      </AppButton>
      <AppButton aria-label="Chrome" $running="#8a8583">
        <ChromeLogo />
      </AppButton>
      <AppButton aria-label="Chrome, work profile" $tile="#f3ebe9" $running="#ab47bc" $wide>
        <ChromeLogo second />
      </AppButton>
    </Apps>
  )
}

export default function App() {
  return (
    <Page>
      <GlobalStyle />
      <BrowserChrome />
      <Header />
      <Body>
        <Editor>
          <EditToolbar />
          <EditorWorkspace />
        </Editor>
        <SidePanel>
          <CalendarIcon />
          <KeepIcon />
          <TasksIcon />
          <hr />
          <button aria-label="Get add-ons">
            <MdAdd size={13} />
          </button>
          <button aria-label="Hide side panel">
            <MdChevronRight size={14} />
          </button>
        </SidePanel>
      </Body>
      <Taskbar>
        <TaskbarApps />
        <Tray>
          <ChevronUp size={12} strokeWidth={2} />
          <Glyph size={12}>
            <path fill="#a9b0b3" stroke="#333" strokeWidth="2" d="M6 19q-5 0-5-5t6-5q2-4 6-3t5 5q5 0 5 4t-4 4z" />
          </Glyph>
          <Glyph size={13} stroke="#333" strokeWidth="2">
            <path d="M3 11q2-7 9-7 5 0 8 4M20 2v6h-6M3 14q1 4 5 6M3 20v-6h5" />
            <circle cx="17" cy="17" r="6" fill="#fb9704" stroke="none" />
          </Glyph>
          <Mic size={12} color="#8e44ad" />
          <Language>
            ENG
            <br />
            IN
          </Language>
          <Wifi size={12} />
          <Volume2 size={12} />
          <Glyph size={12} strokeWidth="2">
            <path d="M1 7h19v10H1zM22 10v4" />
            <path fill="currentColor" d="M4 10h3v4H4z" />
          </Glyph>
          <Clock>
            10:24
            <br />
            30-11-2021
          </Clock>
          <Moon size={11} />
        </Tray>
      </Taskbar>
    </Page>
  )
}
